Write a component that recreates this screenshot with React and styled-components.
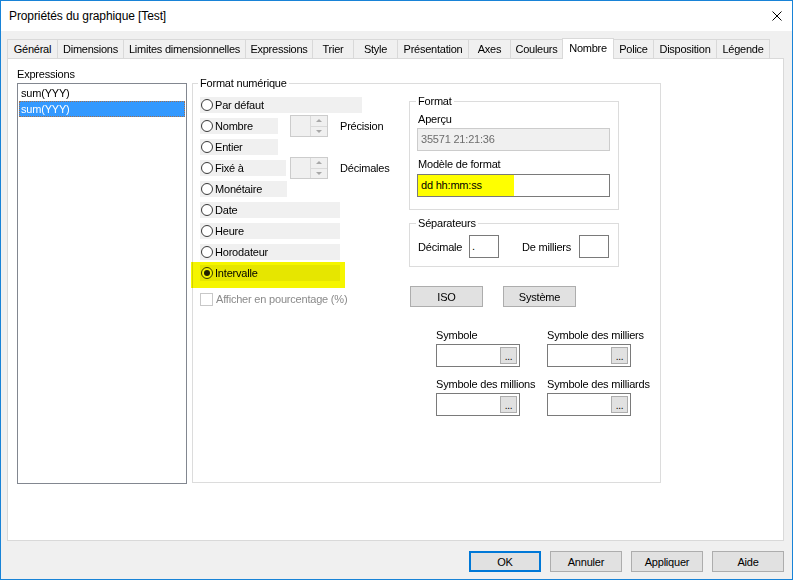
import React from 'react';
import styled, { createGlobalStyle } from 'styled-components';

const GlobalStyle = createGlobalStyle`
  html, body { margin: 0; padding: 0; background: #fff; }
  body {
    font-family: "Liberation Sans", Arial, sans-serif;
    font-size: 11px;
    letter-spacing: -0.2px;
    color: #000;
  }
  #root { width: 793px; height: 580px; }
  * { box-sizing: border-box; }
`;

const Window = styled.div`
  width: 793px;
  height: 580px;
  border: 1px solid #1883d7;
  background: #f0f0f0;
  display: flex;
  flex-direction: column;
  overflow: hidden;
`;

const TitleBar = styled.div`
  height: 30px;
  flex: 0 0 30px;
  background: #fff;
  display: flex;
  align-items: center;
  justify-content: space-between;
  padding: 0 10px 0 8px;
  font-size: 12px;
  letter-spacing: -0.1px;
`;

const Body = styled.div`
  flex: 1;
  display: flex;
  flex-direction: column;
  padding: 7px 8px 7px 6px;
`;

const TabStrip = styled.div`
  display: flex;
  align-items: flex-end;
  height: 20px;
`;

const Tab = styled.div`
  width: ${(p) => p.$w}px;
  height: ${(p) => (p.$active ? 21 : 19)}px;
  margin-right: -1px;
  margin-bottom: ${(p) => (p.$active ? -1 : 0)}px;
  border: 1px solid #d9d9d9;
  border-bottom: none;
  background: ${(p) => (p.$active ? '#fff' : '#f0f0f0')};
  position: relative;
  z-index: ${(p) => (p.$active ? 2 : 1)};
  display: flex;
  align-items: center;
  justify-content: center;
  padding-bottom: ${(p) => (p.$active ? 3 : 0)}px;
  white-space: nowrap;
  letter-spacing: -0.25px;
`;

const Panel = styled.div`
  flex: 0 0 483px;
  height: 483px;
  border: 1px solid #d9d9d9;
  background: #fff;
  position: relative;
  z-index: 0;
  display: flex;
  align-items: flex-start;
  gap: 5px;
  padding: 8px 0 0 9px;
`;

const LeftCol = styled.div`
  width: 170px;
  display: flex;
  flex-direction: column;
`;

const Label = styled.div`
  line-height: 14px;
  height: 14px;
  white-space: nowrap;
  margin: ${(p) => p.$m || '0'};
  color: ${(p) => (p.$disabled ? '#8a8a8a' : '#000')};
`;

const ListBox = styled.div`
  height: 401px;
  border: 1px solid #828790;
  background: #fff;
  padding: 1px;
  margin-top: 2px;
`;

const ListItem = styled.div`
  height: 16px;
  line-height: 14px;
  padding-left: 1px;
  border: 1px ${(p) => (p.$selected ? 'dotted #a07050' : 'solid transparent')};
  background: ${(p) => (p.$selected ? '#3399ff' : 'transparent')};
  color: ${(p) => (p.$selected ? '#fff' : '#000')};
`;

const Group = styled.fieldset`
  margin: ${(p) => p.$m || '0'};
  padding: 0;
  width: ${(p) => p.$w}px;
  height: ${(p) => p.$h}px;
  border: 1px solid #dcdcdc;
  min-inline-size: 0;
`;

const Legend = styled.legend`
  padding: 0 2px;
  margin-left: ${(p) => p.$ml}px;
  line-height: 14px;
  height: 14px;
  white-space: nowrap;
`;

const MainGrid = styled.div`
  display: grid;
  grid-template-columns: 209px 210px;
  padding: 4px 0 0 7px;
`;

const RadioCol = styled.div`
  display: flex;
  flex-direction: column;
  gap: 5px;
  padding-top: 3px;
`;

const RadioItem = styled.div`
  position: relative;
  width: ${(p) => p.$w}px;
  height: 16px;
  background: #f0f0f0;
  display: flex;
  align-items: center;
  gap: 2px;
  white-space: nowrap;

  &::after {
    content: '';
    display: ${(p) => (p.$highlight ? 'block' : 'none')};
    position: absolute;
    top: -3px;
    bottom: -7px;
    left: -9px;
    right: -5px;
    background: #f5f500;
    mix-blend-mode: multiply;
    pointer-events: none;
  }
`;

const RadioCircle = styled.span`
  width: 12px;
  height: 12px;
  margin-left: 1px;
  border-radius: 50%;
  border: 1px solid #3a3a3a;
  background: #fff;
  display: flex;
  align-items: center;
  justify-content: center;

  &::before {
    content: '';
    display: ${(p) => (p.$checked ? 'block' : 'none')};
    width: 6px;
    height: 6px;
    border-radius: 50%;
    background: #222;
  }
`;

const SpinRow = styled.div`
  display: grid;
  grid-template-columns: 90px 38px auto;
  align-items: center;
  height: 16px;
`;

const Spin = styled.div`
  width: 38px;
  height: 22px;
  margin: -3px 0;
  border: 1px solid #cccccc;
  background: #f0f0f0;
  display: flex;
  justify-content: flex-end;
`;

const SpinButtons = styled.div`
  width: 17px;
  display: flex;
  flex-direction: column;
  border-left: 1px solid #dadada;
`;

const SpinBtn = styled.div`
  flex: 1;
  display: flex;
  align-items: center;
  justify-content: center;
  border-top: ${(p) => (p.$down ? '1px solid #dadada' : 'none')};

  &::before {
    content: '';
    width: 0;
    height: 0;
    border-left: 3px solid transparent;
    border-right: 3px solid transparent;
    ${(p) => (p.$down ? 'border-top: 3px solid #a8a8a8;' : 'border-bottom: 3px solid #a8a8a8;')}
  }
`;

const SpinLabel = styled.span`
  margin-left: 12px;
  white-space: nowrap;
`;

const CheckRow = styled.div`
  display: flex;
  align-items: center;
  gap: 3px;
  margin-top: 6px;
  height: 14px;
  color: #8a8a8a;
  white-space: nowrap;
`;

const CheckBox = styled.span`
  width: 13px;
  height: 13px;
  border: 1px solid #c8c8c8;
  background: #fff;
`;

const RightCol = styled.div`
  display: flex;
  flex-direction: column;
`;

const GroupInner = styled.div`
  padding: ${(p) => p.$p};
  display: flex;
  flex-direction: column;
`;

const ReadOnlyBox = styled.div`
  width: 193px;
  height: 23px;
  border: 1px solid #cccccc;
  background: #f0f0f0;
  color: #6d6d6d;
  line-height: 21px;
  padding-left: 3px;
  margin-top: 2px;
`;

const TextBox = styled.div`
  width: ${(p) => p.$w}px;
  height: 23px;
  border: 1px solid #7a7a7a;
  background: #fff;
  line-height: 21px;
  margin-top: ${(p) => p.$mt || 0}px;
  padding-left: ${(p) => p.$pl || 0}px;
  position: relative;
  display: flex;
  align-items: center;
  justify-content: ${(p) => (p.$end ? 'flex-end' : 'flex-start')};
  padding-right: ${(p) => (p.$end ? 2 : 0)}px;
`;

const Marked = styled.span`
  width: 96px;
  height: 21px;
  background: #ffff00;
  padding-left: 3px;
  line-height: 21px;
  white-space: nowrap;
`;

const SepRow = styled.div`
  display: grid;
  grid-template-columns: 51px 30px 23px 57px 30px;
  align-items: center;
`;

const ButtonRow = styled.div`
  display: flex;
  gap: ${(p) => p.$gap}px;
  justify-content: ${(p) => p.$justify || 'flex-start'};
  margin: ${(p) => p.$m || '0'};
`;

const Button = styled.div`
  width: ${(p) => p.$w}px;
  height: 21px;
  border: ${(p) => (p.$default ? '2px solid #0078d7' : '1px solid #adadad')};
  background: #e1e1e1;
  display: flex;
  align-items: center;
  justify-content: center;
  white-space: nowrap;
`;

const SymbolGrid = styled.div`
  display: grid;
  grid-template-columns: 84px 84px;
  column-gap: 27px;
  row-gap: 10px;
  margin: 21px 0 0 27px;
`;

const SymbolCell = styled.div`
  display: flex;
  flex-direction: column;
  gap: 2px;
`;

const DotsButton = styled.div`
  width: 17px;
  height: 17px;
  border: 1px solid #adadad;
  background: #e1e1e1;
  font-size: 10px;
  line-height: 17px;
  text-align: center;
`;

const tabs = [
  ['Général', 51],
  ['Dimensions', 67],
  ['Limites dimensionnelles', 123],
  ['Expressions', 68],
  ['Trier', 42],
  ['Style', 45],
  ['Présentation', 72],
  ['Axes', 43],
  ['Couleurs', 53],
  ['Nombre', 52],
  ['Police', 41],
  ['Disposition', 64],
  ['Légende', 54],
];

const Radio = ({ label, w, checked, highlight }) => (
  <RadioItem $w={w} $highlight={highlight}>
    <RadioCircle $checked={checked} />
    <span>{label}</span>
  </RadioItem>
);

const SpinBox = () => (
  <Spin>
    <SpinButtons>
      <SpinBtn />
      <SpinBtn $down />
    </SpinButtons>
  </Spin>
);

const Symbol = ({ label }) => (
  <SymbolCell>
    <Label>{label}</Label>
    <TextBox $w={84} $end>
      <DotsButton>...</DotsButton>
    </TextBox>
  </SymbolCell>
);

export default function App() {
  return (
    <>
      <GlobalStyle />
      <Window>
        <TitleBar>
          <span>Propriétés du graphique [Test]</span>
          <svg width="10" height="10" viewBox="0 0 10 10">
            <path d="M0.5 0.5 L9.5 9.5 M9.5 0.5 L0.5 9.5" stroke="#000" strokeWidth="1" fill="none" />
          </svg>
        </TitleBar>
        <Body>
          <TabStrip>
            {tabs.map(([t, w]) => (
              <Tab key={t} $w={w} $active={t === 'Nombre'}>
                {t}
              </Tab>
            ))}
          </TabStrip>
          <Panel>
            <LeftCol>
              <Label>Expressions</Label>
              <ListBox>
                <ListItem>sum(YYY)</ListItem>
                <ListItem $selected>sum(YYY)</ListItem>
              </ListBox>
            </LeftCol>
            <Group $w={469} $h={407} $m="9px 0 0 0">
              <Legend $ml={5}>Format numérique</Legend>
              <MainGrid>
                <RadioCol>
                  <Radio label="Par défaut" w={162} />
                  <SpinRow>
                    <Radio label="Nombre" w={78} />
                    <SpinBox />
                    <SpinLabel>Précision</SpinLabel>
                  </SpinRow>
                  <Radio label="Entier" w={78} />
                  <SpinRow>
                    <Radio label="Fixé à" w={86} />
                    <SpinBox />
                    <SpinLabel>Décimales</SpinLabel>
                  </SpinRow>
                  <Radio label="Monétaire" w={87} />
                  <Radio label="Date" w={140} />
                  <Radio label="Heure" w={140} />
                  <Radio label="Horodateur" w={140} />
                  <Radio label="Intervalle" w={140} checked highlight />
                  <CheckRow>
                    <CheckBox />
                    <span>Afficher en pourcentage (%)</span>
                  </CheckRow>
                </RadioCol>
                <RightCol>
                  <Group $w={210} $h={116}>
                    <Legend $ml={6}>Format</Legend>
                    <GroupInner $p="4px 8px 0 7px">
                      <Label $m="0 0 0 1px">Aperçu</Label>
                      <ReadOnlyBox>35571 21:21:36</ReadOnlyBox>
                      <Label $m="6px 0 0 1px">Modèle de format</Label>
                      <TextBox $w={193} $mt={3}>
                        <Marked>dd hh:mm:ss</Marked>
                      </TextBox>
                    </GroupInner>
                  </Group>
                  <Group $w={210} $h={51} $m="6px 0 0 0">
                    <Legend $ml={6}>Séparateurs</Legend>
                    <GroupInner $p="5px 0 0 8px">
                      <SepRow>
                        <span>Décimale</span>
                        <TextBox $w={30} $pl={2}>.</TextBox>
                        <span />
                        <span>De milliers</span>
                        <TextBox $w={30} />
                      </SepRow>
                    </GroupInner>
                  </Group>
                  <ButtonRow $gap={20} $m="19px 0 0 1px">
                    <Button $w={73}>ISO</Button>
                    <Button $w={73}>Système</Button>
                  </ButtonRow>
                  <SymbolGrid>
                    <Symbol label="Symbole" />
                    <Symbol label="Symbole des milliers" />
                    <Symbol label="Symbole des millions" />
                    <Symbol label="Symbole des milliards" />
                  </SymbolGrid>
                </RightCol>
              </MainGrid>
            </Group>
          </Panel>
          <ButtonRow $gap={9} $justify="flex-end" $m="10px 0 0 0">
            <Button $w={72} $default>OK</Button>
            <Button $w={72}>Annuler</Button>
            <Button $w={72}>Appliquer</Button>
            <Button $w={72}>Aide</Button>
          </ButtonRow>
        </Body>
      </Window>
    </>
  );
}
